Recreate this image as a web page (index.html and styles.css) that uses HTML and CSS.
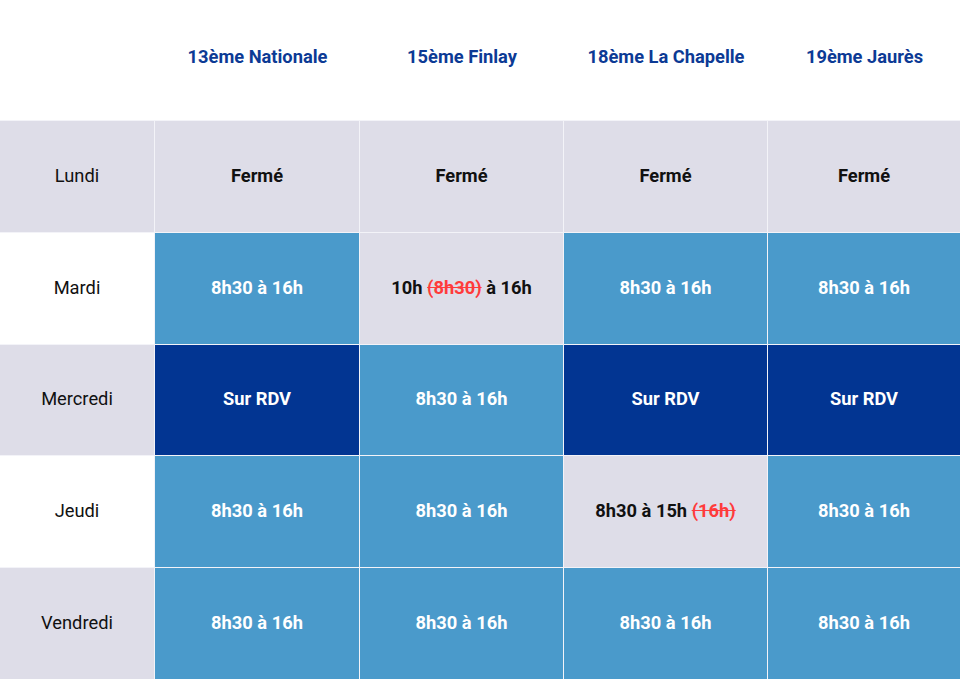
FILE: index.html
```html
<!DOCTYPE html>
<html lang="fr">
<head>
<meta charset="utf-8">
<title>Horaires</title>
<link rel="stylesheet" href="styles.css">
</head>
<body>
<div class="table">
  <div class="head empty"></div>
  <div class="head">13ème Nationale</div>
  <div class="head">15ème Finlay</div>
  <div class="head">18ème La Chapelle</div>
  <div class="head">19ème Jaurès</div>

  <div class="day gray">Lundi</div>
  <div class="cell gray">Fermé</div>
  <div class="cell gray">Fermé</div>
  <div class="cell gray">Fermé</div>
  <div class="cell gray">Fermé</div>

  <div class="day white">Mardi</div>
  <div class="cell blue">8h30 à 16h</div>
  <div class="cell gray">10h&nbsp;<s class="old">(8h30)</s>&nbsp;à 16h</div>
  <div class="cell blue">8h30 à 16h</div>
  <div class="cell blue">8h30 à 16h</div>

  <div class="day gray">Mercredi</div>
  <div class="cell dark">Sur RDV</div>
  <div class="cell blue">8h30 à 16h</div>
  <div class="cell dark">Sur RDV</div>
  <div class="cell dark">Sur RDV</div>

  <div class="day white">Jeudi</div>
  <div class="cell blue">8h30 à 16h</div>
  <div class="cell blue">8h30 à 16h</div>
  <div class="cell gray">8h30 à 15h&nbsp;<s class="old">(16h)</s></div>
  <div class="cell blue">8h30 à 16h</div>

  <div class="day gray">Vendredi</div>
  <div class="cell blue">8h30 à 16h</div>
  <div class="cell blue">8h30 à 16h</div>
  <div class="cell blue">8h30 à 16h</div>
  <div class="cell blue">8h30 à 16h</div>
</div>
</body>
</html>
```
FILE: styles.css
```css
html, body {
  margin: 0;
  padding: 0;
  background: #ffffff;
}
body {
  width: 960px;
  height: 679px;
  overflow: hidden;
  font-family: Roboto, "Liberation Sans", sans-serif;
}
.table {
  display: grid;
  grid-template-columns: 154px 204px 203px 203px 1fr;
  grid-template-rows: 120px repeat(5, 1fr);
  gap: 1px;
  height: 679px;
  background: #f3f3f8;
}
.table > div {
  display: flex;
  align-items: center;
  justify-content: center;
  font-size: 18.3px;
  white-space: nowrap;
}
.head {
  background: #ffffff;
  color: #0c3a95;
  font-weight: 700;
  padding-bottom: 8px;
  margin-right: -1px;
}
.day, .cell {
  padding-bottom: 2px;
}
.day {
  color: #111111;
  font-weight: 400;
}
.cell {
  font-weight: 700;
}
.gray {
  background: #dedde8;
  color: #111111;
}
.white {
  background: #ffffff;
}
.blue {
  background: #4a9acb;
  color: #ffffff;
}
.dark {
  background: #023592;
  color: #ffffff;
}
.old {
  color: #ff3b3b;
  text-decoration: line-through;
  text-decoration-color: #ff3b3b;
}
```
